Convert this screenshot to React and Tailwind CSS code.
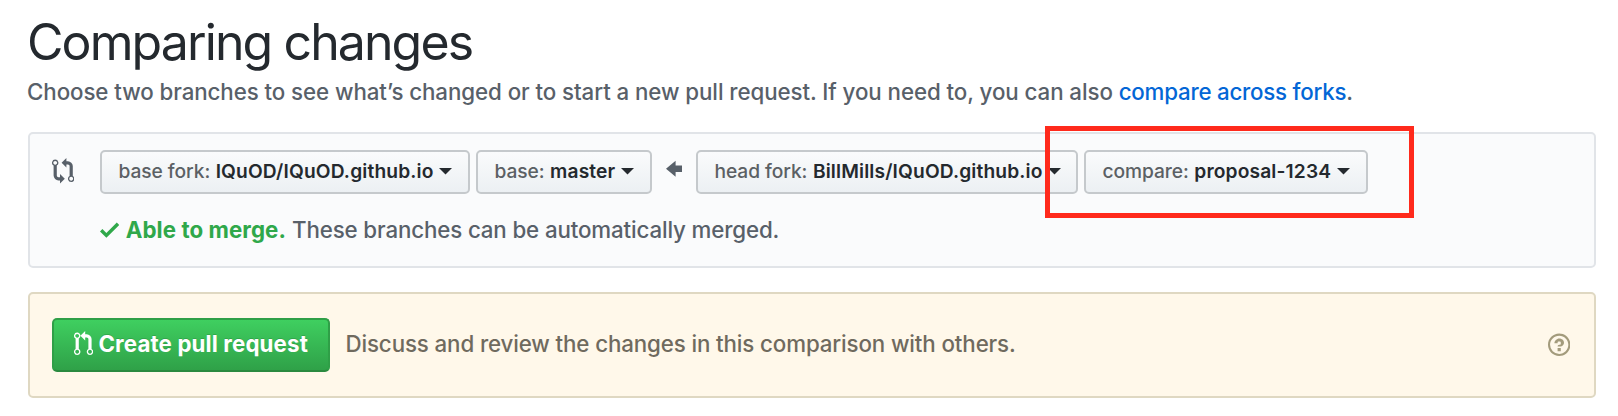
const ICONS = {
  compare: { w: 14, d: "M5 12H4c-.27-.02-.48-.11-.69-.31-.21-.2-.3-.42-.31-.69V4.72A1.993 1.993 0 0 0 2 1a1.993 1.993 0 0 0-1 3.72V11c.03.78.34 1.47.94 2.06.6.59 1.28.91 2.06.94h1v2l3-3-3-3v2zM2 1.8c.66 0 1.2.55 1.2 1.2 0 .65-.55 1.2-1.2 1.2C1.35 4.2.8 3.65.8 3c0-.65.55-1.2 1.2-1.2zm11 9.48V5c-.03-.78-.34-1.47-.94-2.06-.6-.59-1.28-.91-2.06-.94H9V0L6 3l3 3V4h1c.27.02.48.11.69.31.21.2.3.42.31.69v6.28A1.993 1.993 0 0 0 12 15a1.993 1.993 0 0 0 1-3.72zm-1 2.92c-.66 0-1.2-.55-1.2-1.2 0-.65.55-1.2 1.2-1.2.65 0 1.2.55 1.2 1.2 0 .65-.55 1.2-1.2 1.2z" },
  pull: { w: 12, d: "M11 11.28V5c-.03-.78-.34-1.47-.94-2.06C9.46 2.35 8.78 2.03 8 2H7V0L4 3l3 3V4h1c.27.02.48.11.69.31.21.2.3.42.31.69v6.28A1.993 1.993 0 0 0 10 15a1.993 1.993 0 0 0 1-3.72zm-1 2.92c-.66 0-1.2-.55-1.2-1.2 0-.65.55-1.2 1.2-1.2.65 0 1.2.55 1.2 1.2 0 .65-.55 1.2-1.2 1.2zM4 3c0-1.11-.89-2-2-2a1.993 1.993 0 0 0-1 3.72v6.56A1.993 1.993 0 0 0 2 15a1.993 1.993 0 0 0 1-3.72V4.72c.59-.34 1-.98 1-1.72zm-.8 10c0 .66-.55 1.2-1.2 1.2-.65 0-1.2-.55-1.2-1.2 0-.65.55-1.2 1.2-1.2.65 0 1.2.55 1.2 1.2zM2 4.2C1.34 4.2.8 3.65.8 3c0-.65.55-1.2 1.2-1.2.65 0 1.2.55 1.2 1.2 0 .65-.55 1.2-1.2 1.2z" },
  question: { w: 14, d: "M6 10h2v2H6v-2zm4-3.5C10 8.64 8 9 8 9H6c0-.55.45-1 1-1h.5c.28 0 .5-.22.5-.5v-1c0-.28-.22-.5-.5-.5h-1c-.28 0-.5.22-.5.5V7H4c0-1.5 1.5-3 3-3s3 1 3 2.5zM7 2.3c3.14 0 5.7 2.56 5.7 5.7s-2.56 5.7-5.7 5.7A5.71 5.71 0 0 1 1.3 8c0-3.14 2.56-5.7 5.7-5.7zM7 1C3.14 1 0 4.14 0 8s3.14 7 7 7 7-3.14 7-7-3.14-7-7-7z" },
  check: { w: 12, d: "M12 5l-8 8-4-4 1.5-1.5L4 10l6.5-6.5L12 5z" },
  arrow: { w: 10, d: "M6 3L0 8l6 5v-3h4V6H6V3z" },
};

function Icon({ name, className }) {
  const { w, d } = ICONS[name];
  return (
    <svg viewBox={`0 0 ${w} 16`} className={`shrink-0 fill-current ${className}`} aria-hidden="true">
      <path fillRule="evenodd" d={d} />
    </svg>
  );
}

function BranchButton({ label, value, className }) {
  return (
    <button className={`flex h-11 shrink-0 items-center whitespace-nowrap rounded-[5px] border-2 border-[#c5c9cc] bg-linear-to-b from-[#fafbfc] to-[#ecf0f3] pb-[2px] pl-[16.500px] text-[19.2px] leading-[28px] ${className}`}>
      <span className="font-[450] tracking-[-0.06px] text-[#5b6064]">{label}</span>
      <span className="ml-[5.500px] font-[620] tracking-[0.14px] text-[#24292e]">{value}</span>
      <svg viewBox="0 0 13 6.5" className="ml-[5.500px] mt-[1px] h-[6.500px] w-[13px] shrink-0 fill-[#24292e]" aria-hidden="true">
        <path d="M0 0h13L6.500 6.500z" />
      </svg>
    </button>
  );
}

export default function App() {
  return (
    <main className="h-[416px] w-[1618px] overflow-hidden bg-white pl-7 pr-[22px] pt-[10px] font-['Inter',sans-serif] text-[22.3px] font-[450] tracking-[-0.1px] text-[#586069]">
      <h1 className="ml-[-1px] h-[66px] whitespace-nowrap text-[50px] leading-[64px] font-[440] tracking-[-1.9px] text-[#24292e]">Comparing changes</h1>
      <p className="ml-[-1px] h-[56px] whitespace-nowrap leading-[32px] tracking-[-0.07px]">
        Choose two branches to see what’s changed or to start a new pull request. If you need to, you can also{" "}
        <a className="tracking-[-0.22px] text-[#0366d6]">compare across forks</a>.
      </p>

      <section className="relative h-[136px] rounded-[5px] border-2 border-[#e1e4e8] bg-[#fafbfc] pl-[22px] pt-4">
        <div className="flex h-11 items-start">
          <Icon name="compare" className="mt-2 h-[25.600px] w-[22.400px]" />
          <div className="ml-[25.600px] flex">
            <BranchButton label="base fork:" value="IQuOD/IQuOD.github.io" className="w-[370px]" />
            <BranchButton label="base:" value="master" className="ml-[6px] w-[176px]" />
            <Icon name="arrow" className="ml-[14.500px] mt-[6px] h-[25.600px] w-4" />
            <BranchButton label="head fork:" value="BillMills/IQuOD.github.io" className="ml-[13.500px] w-[382px]" />
            <BranchButton label="compare:" value="proposal-1234" className="ml-[6px] w-[284px]" />
          </div>
        </div>
        <div className="mt-5 flex items-center pl-12 leading-[32px] whitespace-nowrap">
          <Icon name="check" className="h-[25.600px] w-[19.200px] text-[#2fa84a]" />
          <span className="ml-[6.500px] font-[680] tracking-[0.08px] text-[#2fa84a]">Able to merge.</span>
          <span className="ml-[6px] tracking-[-0.13px]">These branches can be automatically merged.</span>
        </div>
        <div className="absolute left-[1015px] top-[-8px] h-[92px] w-[369px] border-[5px] border-[#ff2a1c]" />
      </section>

      <section className="mt-6 flex h-[106px] items-center rounded-[5px] border-2 border-[#dfd8c2] bg-[#fff8ea] pl-[22px] pr-[24px] whitespace-nowrap">
        <button className="flex h-[54px] w-[278px] shrink-0 items-center rounded-[5px] border-2 border-[#2f9f47] border-b-[#2b8a3f] bg-linear-to-b from-[#3fcf60] to-[#2fa148] pb-[3px] pl-5 font-[670] text-white [text-shadow:0_-1px_0_rgba(0,0,0,0.15)]">
          <Icon name="pull" className="h-[25.600px] w-[19.200px]" />
          <span className="ml-[5.300px] tracking-[0.13px]">Create pull request</span>
        </button>
        <p className="ml-[15.500px] pb-[2px] tracking-[-0.115px] text-[#6f6a5e]">Discuss and review the changes in this comparison with others.</p>
        <Icon name="question" className="ml-auto h-[25.600px] w-[22.400px] text-[#a39b7c]" />
      </section>
    </main>
  );
}
